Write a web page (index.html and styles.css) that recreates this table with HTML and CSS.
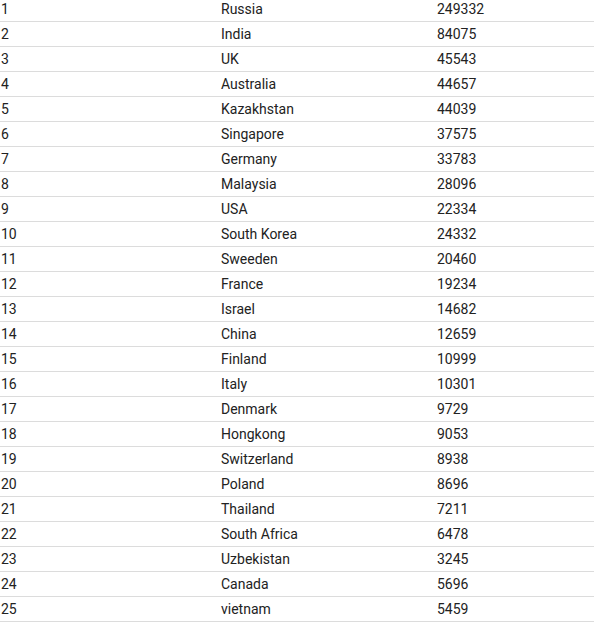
FILE: index.html
```html
<!DOCTYPE html>
<html>
<head>
<meta charset="utf-8">
<link rel="stylesheet" href="styles.css">
</head>
<body>
<table class="rank-table">
<colgroup><col class="c-rank"><col class="c-country"><col class="c-value"></colgroup>
<tbody>
<tr><td>1</td><td>Russia</td><td>249332</td></tr>
<tr><td>2</td><td>India</td><td>84075</td></tr>
<tr><td>3</td><td>UK</td><td>45543</td></tr>
<tr><td>4</td><td>Australia</td><td>44657</td></tr>
<tr><td>5</td><td>Kazakhstan</td><td>44039</td></tr>
<tr><td>6</td><td>Singapore</td><td>37575</td></tr>
<tr><td>7</td><td>Germany</td><td>33783</td></tr>
<tr><td>8</td><td>Malaysia</td><td>28096</td></tr>
<tr><td>9</td><td>USA</td><td>22334</td></tr>
<tr><td>10</td><td>South Korea</td><td>24332</td></tr>
<tr><td>11</td><td>Sweeden</td><td>20460</td></tr>
<tr><td>12</td><td>France</td><td>19234</td></tr>
<tr><td>13</td><td>Israel</td><td>14682</td></tr>
<tr><td>14</td><td>China</td><td>12659</td></tr>
<tr><td>15</td><td>Finland</td><td>10999</td></tr>
<tr><td>16</td><td>Italy</td><td>10301</td></tr>
<tr><td>17</td><td>Denmark</td><td>9729</td></tr>
<tr><td>18</td><td>Hongkong</td><td>9053</td></tr>
<tr><td>19</td><td>Switzerland</td><td>8938</td></tr>
<tr><td>20</td><td>Poland</td><td>8696</td></tr>
<tr><td>21</td><td>Thailand</td><td>7211</td></tr>
<tr><td>22</td><td>South Africa</td><td>6478</td></tr>
<tr><td>23</td><td>Uzbekistan</td><td>3245</td></tr>
<tr><td>24</td><td>Canada</td><td>5696</td></tr>
<tr><td>25</td><td>vietnam</td><td>5459</td></tr>
</tbody>
</table>
</body>
</html>
```
FILE: styles.css
```css
html, body {
  margin: 0;
  padding: 0;
  background: #fff;
}
body {
  font-family: Roboto, "Liberation Sans", sans-serif;
  font-size: 14px;
  color: #222;
}
.rank-table {
  width: 594px;
  border-collapse: collapse;
  table-layout: fixed;
  margin-top: -3px;
}
.c-rank { width: 220px; }
.c-country { width: 216px; }
.c-value { width: 158px; }
.rank-table td {
  height: 24px;
  padding: 0 1px;
  border-bottom: 1px solid #dcdcdc;
  vertical-align: middle;
  line-height: 16px;
}
```
